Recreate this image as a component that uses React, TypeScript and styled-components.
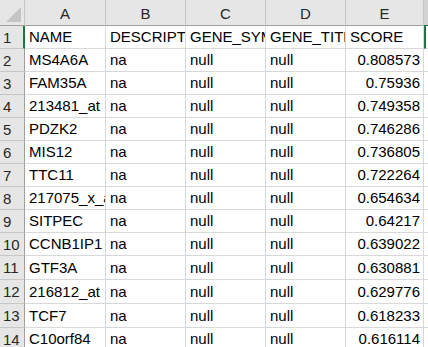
import React from 'react'
import styled, { createGlobalStyle } from 'styled-components'

const colors = {
    header: '#e6e6e6',
    headerActive: '#d2d2d2',
    headerLine: '#9f9f9f',
    headerSep: '#c6c6c6',
    grid: '#d9d9d9',
    green: '#217346',
    text: '#000',
}

const GlobalStyle = createGlobalStyle`
    html, body {
        margin: 0;
        padding: 0;
        background: #fff;
        overflow: hidden;
    }
    body {
        font-family: "Liberation Sans", "Noto Sans CJK SC", sans-serif;
    }
`

const columns = ['A', 'B', 'C', 'D', 'E']

const rows: string[][] = [
    ['NAME', 'DESCRIPTION', 'GENE_SYMBOL', 'GENE_TITLE', 'SCORE'],
    ['MS4A6A', 'na', 'null', 'null', '0.808573'],
    ['FAM35A', 'na', 'null', 'null', '0.75936'],
    ['213481_at', 'na', 'null', 'null', '0.749358'],
    ['PDZK2', 'na', 'null', 'null', '0.746286'],
    ['MIS12', 'na', 'null', 'null', '0.736805'],
    ['TTC11', 'na', 'null', 'null', '0.722264'],
    ['217075_x_at', 'na', 'null', 'null', '0.654634'],
    ['SITPEC', 'na', 'null', 'null', '0.64217'],
    ['CCNB1IP1', 'na', 'null', 'null', '0.639022'],
    ['GTF3A', 'na', 'null', 'null', '0.630881'],
    ['216812_at', 'na', 'null', 'null', '0.629776'],
    ['TCF7', 'na', 'null', 'null', '0.618233'],
    ['C10orf84', 'na', 'null', 'null', '0.616114'],
]

const App: React.FC = () => {
    return (
        <>
            <GlobalStyle />
            <Sheet>
                <Corner>
                    <svg width="16" height="16" viewBox="0 0 16 16">
                        <polygon points="15,0 15,15 0,15" fill="#c4c4c4" />
                    </svg>
                </Corner>
                {columns.map(col => <ColHeader key={col}>{col}</ColHeader>)}
                <ColHeader active />
                {rows.map((row, r) => (
                    <React.Fragment key={r}>
                        <RowHeader active={r === 0}>{r + 1}</RowHeader>
                        {row.map((value, c) => (
                            <Cell key={c} numeric={r > 0 && c === 4}>{value}</Cell>
                        ))}
                        <Cell selected={r === 0} />
                    </React.Fragment>
                ))}
            </Sheet>
        </>
    )
}
export default App

const Sheet = styled.div`
    display: grid;
    grid-template-columns: 25px 81px 80px 80px 80px 78px 1fr;
    grid-template-rows: 26px repeat(10, 23px) 24px 24px 24px 23px;
    width: 428px;
    height: 347px;
    overflow: hidden;
    font-size: 15px;
    color: ${colors.text};
`
const Corner = styled.div`
    background: ${colors.header};
    border-right: 1px solid ${colors.headerSep};
    border-bottom: 1px solid ${colors.headerLine};
    display: flex;
    align-items: flex-end;
    justify-content: flex-end;
    padding: 0 2px 2px 0;
    box-sizing: border-box;
`
const ColHeader = styled.div<{ active?: boolean }>`
    background: ${props => props.active ? colors.headerActive : colors.header};
    border-right: 1px solid ${colors.headerSep};
    border-bottom: 1px solid ${props => props.active ? colors.green : colors.headerLine};
    box-sizing: border-box;
    display: flex;
    align-items: center;
    justify-content: center;
    color: #262626;
    padding-top: 1px;
`
const RowHeader = styled.div<{ active?: boolean }>`
    background: ${colors.header};
    border-right: ${props => props.active ? `2px solid ${colors.green}` : `1px solid ${colors.headerLine}`};
    border-bottom: 1px solid ${colors.headerSep};
    box-sizing: border-box;
    display: flex;
    align-items: center;
    padding-left: 3px;
    color: #262626;
`
const Cell = styled.div<{ numeric?: boolean, selected?: boolean }>`
    border-right: 1px solid ${colors.grid};
    border-bottom: 1px solid ${colors.grid};
    ${props => props.selected && `border-left: 2px solid ${colors.green};`}
    box-sizing: border-box;
    display: flex;
    align-items: center;
    justify-content: ${props => props.numeric ? 'flex-end' : 'flex-start'};
    padding: 0 3px 1px 4px;
    white-space: nowrap;
    overflow: hidden;
    min-width: 0;
`
